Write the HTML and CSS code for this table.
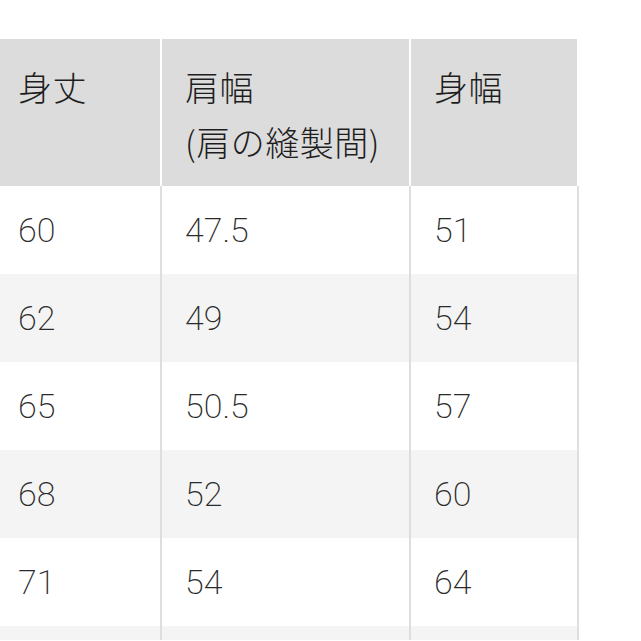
FILE: index.html
```html
<!DOCTYPE html>
<html lang="ja">
<head>
<meta charset="utf-8">
<link rel="stylesheet" href="styles.css">
</head>
<body>
<div class="table">
  <div class="row head">
    <div class="cell first">身丈</div>
    <div class="cell">肩幅<br>(肩の縫製間)</div>
    <div class="cell">身幅</div>
  </div>
  <div class="row body">
    <div class="cell first">60</div><div class="cell">47.5</div><div class="cell">51</div>
  </div>
  <div class="row body alt">
    <div class="cell first">62</div><div class="cell">49</div><div class="cell">54</div>
  </div>
  <div class="row body">
    <div class="cell first">65</div><div class="cell">50.5</div><div class="cell">57</div>
  </div>
  <div class="row body alt">
    <div class="cell first">68</div><div class="cell">52</div><div class="cell">60</div>
  </div>
  <div class="row body">
    <div class="cell first">71</div><div class="cell">54</div><div class="cell">64</div>
  </div>
  <div class="row body alt last">
    <div class="cell first"></div><div class="cell"></div><div class="cell"></div>
  </div>
</div>
</body>
</html>
```
FILE: styles.css
```css
html, body {
  margin: 0;
  padding: 0;
  background: #ffffff;
  overflow: hidden;
}
body {
  padding-top: 39px;
}
.table {
  width: 579px;
}
.row {
  display: grid;
  grid-template-columns: 160px 247px 166px;
  column-gap: 2px;
}
.head {
  background: #ffffff;
  width: 577px;
}
.head .cell {
  background: #dcdcdc;
  color: #1e1e1e;
  font-family: "Noto Sans CJK JP", "Noto Sans", sans-serif;
  font-weight: 300;
  font-size: 34px;
  letter-spacing: 0.5px;
  line-height: 55px;
  padding: 20px 10px 17px 23px;
}
.head .cell.first {
  padding-left: 18px;
}
.body {
  background: #dedede;
  border-right: 2px solid #dedede;
  width: 577px;
}
.body .cell {
  background: #ffffff;
  height: 88px;
  display: flex;
  align-items: center;
  padding-left: 23px;
  font-family: Roboto, "Liberation Sans", sans-serif;
  font-weight: 200;
  font-size: 34px;
  color: #2a2a2a;
}
.body .cell.first {
  padding-left: 18px;
}
.body.alt .cell {
  background: #f4f4f4;
}
.body.last .cell {
  height: 14px;
}
```
